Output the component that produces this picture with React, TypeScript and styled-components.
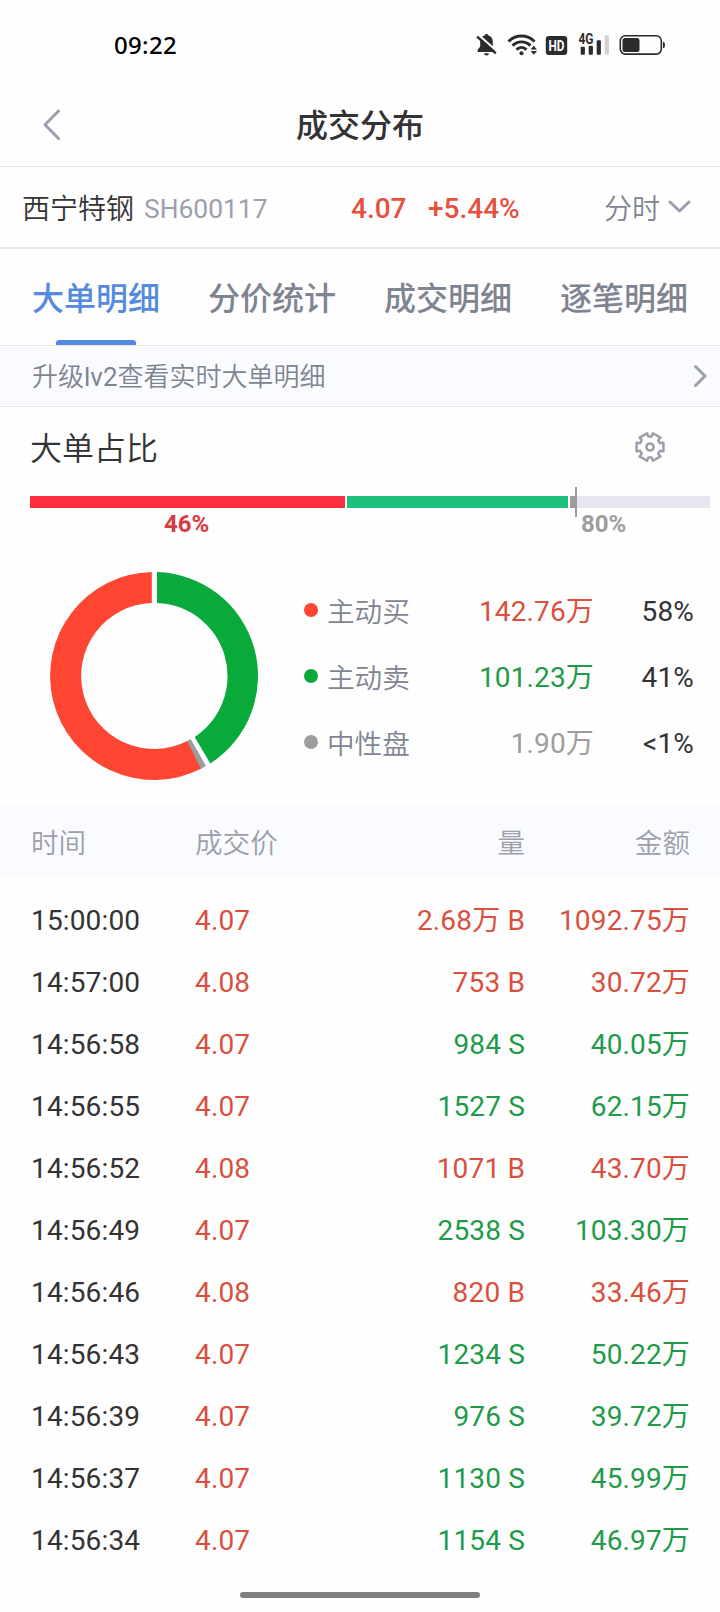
import React from "react";
import styled, { createGlobalStyle } from "styled-components";

const color = {
  ink: "#333333",
  slate: "#7f8491",
  mute: "#9c9fab",
  line: "#e5e6ea",
  panel: "#fafbff",
  blue: "#548ae0",
  up: "#d9503f",
  down: "#219a4a",
  gray: "#9d9d9d",
};

const GlobalStyle = createGlobalStyle`
  *, *::before, *::after { box-sizing: border-box; }
  body {
    margin: 0;
    background: #fefefe;
    color: ${color.ink};
    font-family: Roboto, "Noto Sans CJK SC", sans-serif;
    font-size: 28px;
  }
`;

const Screen = styled.main`
  display: flex;
  flex-direction: column;
  width: 720px;
  height: 1612px;
  overflow: hidden;
  background: #fefefe;
`;

const StatusBar = styled.div`
  display: flex;
  align-items: center;
  justify-content: space-between;
  height: 90px;
  padding: 0 54px 0 114px;
`;

const Clock = styled.span`
  font: 500 24px/30px "Noto Sans", sans-serif;
  letter-spacing: 0.3px;
  color: #000;
`;

const StatusIcons = styled.svg`
  display: block;
  width: 190px;
  height: 26px;
`;

const NavBar = styled.header`
  display: grid;
  grid-template-columns: 60px 1fr 60px;
  align-items: center;
  height: 77px;
  padding: 0 24px 8px;
  border-bottom: 1px solid ${color.line};
`;

const BackButton = styled.button`
  display: flex;
  align-items: center;
  padding: 1px 0 0 18px;
  border: 0;
  background: none;
`;

const Title = styled.h1`
  margin: 0;
  padding-top: 4px;
  font-size: 32px;
  line-height: 40px;
  font-weight: 500;
  text-align: center;
`;

const StockRow = styled.section`
  display: flex;
  align-items: center;
  height: 82px;
  padding: 4px 29px 0 22px;
  border-bottom: 2px solid ${color.line};
  line-height: 40px;
`;

const StockName = styled.span`
  width: 122px;
  padding-top: 1px;
  font-weight: 350;
`;

const StockCode = styled.span`
  width: 207px;
  padding-bottom: 1px;
  font-size: 26.4px;
  color: ${color.mute};
`;

const Quote = styled.span<{ $width: number }>`
  width: ${(p) => p.$width}px;
  font-weight: 500;
  color: #e5503f;
`;

const PeriodPicker = styled.button`
  display: flex;
  align-items: center;
  gap: 8px;
  margin-left: auto;
  padding: 1px 0 0;
  border: 0;
  background: none;
  font: inherit;
  font-weight: 350;
  color: ${color.slate};

  svg { margin-top: -5px; }
`;

const Tabs = styled.nav`
  display: grid;
  grid-template-columns: repeat(4, 176px);
  justify-content: center;
  height: 97px;
  border-bottom: 1px solid ${color.line};
`;

const Tab = styled.button<{ $active?: boolean }>`
  display: flex;
  flex-direction: column;
  align-items: center;
  justify-content: space-between;
  padding: 30px 0 0;
  border: 0;
  background: none;
  font: 500 32px/40px Roboto, "Noto Sans CJK SC", sans-serif;
  color: ${(p) => (p.$active ? color.blue : color.slate)};

  &::after {
    content: "";
    width: 80px;
    height: 5px;
    border-radius: 3px 3px 0 0;
    background: ${(p) => (p.$active ? color.blue : "transparent")};
  }
`;

const Notice = styled.section`
  display: flex;
  align-items: center;
  justify-content: space-between;
  height: 61px;
  padding: 0 12px 0 32px;
  border-bottom: 1px solid ${color.line};
  background: ${color.panel};
  font-size: 26px;
  line-height: 36px;
  font-weight: 350;
  color: ${color.slate};
`;

const NoticeText = styled.span`
  padding-top: 2px;
`;

const Level = styled.span`
  font-weight: 400;
`;

const RatioHeader = styled.div`
  display: flex;
  align-items: center;
  justify-content: space-between;
  height: 80px;
  padding: 0 54px 1px 30px;
`;

const RatioTitle = styled.h2`
  margin: 0;
  padding-top: 4px;
  font-size: 32px;
  line-height: 40px;
  font-weight: 350;
`;

const RatioBar = styled.div`
  display: flex;
  align-items: center;
  gap: 2px;
  height: 30px;
  padding: 0 10px 0 30px;
`;

const Segment = styled.div<{ $width: number; $fill: string }>`
  width: ${(p) => p.$width}px;
  height: 12px;
  background: ${(p) => p.$fill};
`;

const Marker = styled.div`
  width: 2px;
  height: 30px;
  margin-left: -2px;
  background: ${color.gray};
`;

const Rest = styled.div`
  flex: 1;
  height: 12px;
  margin-left: -2px;
  background: #e5e6f0;
`;

const RatioLabels = styled.div`
  display: flex;
  height: 35px;
  padding-left: 164px;
  margin-top: -7px;
  font-size: 24px;
  line-height: 28px;
  font-weight: 700;
`;

const RatioLabel = styled.span<{ $width: number; $color: string }>`
  width: ${(p) => p.$width}px;
  color: ${(p) => p.$color};
`;

const Distribution = styled.section`
  display: flex;
  height: 261px;
  padding-left: 50px;
`;

const Donut = styled.svg`
  width: 208px;
  height: 208px;
  margin-top: 27px;
`;

const Legend = styled.ul`
  display: flex;
  flex-direction: column;
  margin: 32px 0 0 46px;
  padding: 0;
  list-style: none;
`;

const LegendRow = styled.li`
  display: grid;
  grid-template-columns: 23px 120px 147px 100px;
  align-items: center;
  height: 66px;
  line-height: 40px;
`;

const Dot = styled.span<{ $fill: string }>`
  width: 14px;
  height: 14px;
  border-radius: 50%;
  background: ${(p) => p.$fill};
`;

const LegendName = styled.span`
  padding-top: 5px;
  font-size: 27.6px;
  font-weight: 350;
  color: ${color.slate};
`;

const LegendValue = styled.span<{ $color?: string }>`
  padding-top: 4px;
  letter-spacing: 0.15px;
  text-align: right;
  color: ${(p) => p.$color ?? color.ink};
`;

const TableRow = styled.div`
  display: grid;
  grid-template-columns: 164px 139px 191px 165px;
  align-items: center;
  height: 62px;
  padding: 2px 30px 0 31px;
  line-height: 40px;
  letter-spacing: 0.15px;
`;

const TableHead = styled(TableRow)`
  height: 70px;
  padding-top: 5px;
  background: ${color.panel};
  font-size: 27.6px;
  font-weight: 350;
  letter-spacing: 0;
  color: ${color.mute};
`;

const TableBody = styled.div`
  display: flex;
  flex-direction: column;
  padding-top: 13px;
`;

const Cell = styled.span<{ $end?: boolean; $color?: string }>`
  text-align: ${(p) => (p.$end ? "right" : "left")};
  color: ${(p) => p.$color ?? "inherit"};
  white-space: nowrap;
`;

const HomeIndicator = styled.div`
  flex: none;
  width: 240px;
  height: 6px;
  margin: 21px auto 0;
  border-radius: 3px;
  background: #808080;
`;

const tabs = ["大单明细", "分价统计", "成交明细", "逐笔明细"];

const legend = [
  { name: "主动买", value: "142.76万", share: "58%", fill: "#fe4633", text: color.up },
  { name: "主动卖", value: "101.23万", share: "41%", fill: "#09a93b", text: color.down },
  { name: "中性盘", value: "1.90万", share: "<1%", fill: color.gray, text: color.gray },
];

type Side = "B" | "S";
const trades: [string, string, string, Side, string][] = [
  ["15:00:00", "4.07", "2.68万", "B", "1092.75万"],
  ["14:57:00", "4.08", "753", "B", "30.72万"],
  ["14:56:58", "4.07", "984", "S", "40.05万"],
  ["14:56:55", "4.07", "1527", "S", "62.15万"],
  ["14:56:52", "4.08", "1071", "B", "43.70万"],
  ["14:56:49", "4.07", "2538", "S", "103.30万"],
  ["14:56:46", "4.08", "820", "B", "33.46万"],
  ["14:56:43", "4.07", "1234", "S", "50.22万"],
  ["14:56:39", "4.07", "976", "S", "39.72万"],
  ["14:56:37", "4.07", "1130", "S", "45.99万"],
  ["14:56:34", "4.07", "1154", "S", "46.97万"],
];

function StatusGlyphs() {
  return (
    <StatusIcons viewBox="0.5 -0.3 190 26" fill="#2b2b2b">
      {/* muted bell */}
      <path d="M11 1.600c.9 0 1.700.6 1.900 1.500 2.800.8 4.400 3 4.400 6v5.200l2.500 3.100v2.200H2.200v-2.200l2.500-3.100V9.100c0-3 1.600-5.200 4.400-6 .2-.9 1-1.500 1.900-1.500zM8.600 20.900h4.800a2.400 2.400 0 0 1-4.800 0z" />
      <path d="M2.500 2.200 22 19.400" stroke="#fefefe" strokeWidth="2.200" />
      <path d="M1.600 4.300 20.300 21" stroke="#2b2b2b" strokeWidth="2.400" />
      {/* wifi */}
      <g fill="none" stroke="#2b2b2b" strokeWidth="2.900">
        <path d="M33 9.200c7.300-7.300 18.700-7.300 26 0" />
        <path d="M37 13.300c5.100-5 12.900-5 18 0" />
        <path d="M41 17.300c2.900-2.900 7.100-2.900 10 0" />
      </g>
      <circle cx="46" cy="21" r="2" />
      <path d="m58.300 13.400 3.200 3.800h-6.400zm0 9 3.200-3.800h-6.400z" />
      {/* HD badge */}
      <rect x="70.300" y="3.800" width="21.400" height="18.800" rx="3" />
      <text x="81" y="18.400" textAnchor="middle" textLength="16" lengthAdjust="spacingAndGlyphs" fontFamily="Roboto" fontSize="14.500" fontWeight="700" fill="#fff">HD</text>
      {/* signal */}
      <text x="103" y="11.600" textLength="15" lengthAdjust="spacingAndGlyphs" fontFamily="Roboto" fontSize="14" fontWeight="700">4G</text>
      <rect x="105.200" y="14.500" width="4.200" height="8" rx="1" />
      <rect x="113.200" y="13.500" width="4.200" height="9" rx="1" />
      <rect x="121.200" y="8" width="4.200" height="14.500" rx="1" />
      <rect x="129.200" y="3" width="4.200" height="19.500" rx="1" fill="#d2d2d2" />
      {/* battery */}
      <rect x="144.800" y="3.500" width="41" height="18.300" rx="5" fill="none" stroke="#2b2b2b" strokeWidth="1.600" />
      <rect x="147" y="5.700" width="17" height="14" rx="2.500" />
      <path d="M187.500 9.500c1.300 0 1.900 1 1.900 3.200s-.6 3.200-1.900 3.200z" />
    </StatusIcons>
  );
}

type ChevronProps = { points: string; width: number; height: number; stroke?: string };
function Chevron({ points, width, height, stroke = color.mute }: ChevronProps) {
  return (
    <svg width={width} height={height} viewBox={`0 0 ${width} ${height}`}>
      <polyline points={points} fill="none" stroke={stroke} strokeWidth="3" strokeLinecap="round" strokeLinejoin="round" />
    </svg>
  );
}

function gearPoints() {
  const out: string[] = [];
  for (let tooth = 0; tooth < 6; tooth++) {
    for (const [offset, radius] of [[-21, 10.6], [-18, 14.1], [18, 14.1], [21, 10.6]]) {
      const a = ((tooth * 60 + offset) * Math.PI) / 180;
      out.push(`${(radius * Math.cos(a)).toFixed(2)},${(radius * Math.sin(a)).toFixed(2)}`);
    }
  }
  return out.join(" ");
}

function Gear() {
  return (
    <svg width="32" height="32" viewBox="-16 -16 32 32" fill="none" stroke={color.mute} strokeWidth="2.500" strokeLinejoin="round">
      <polygon points={gearPoints()} />
      <circle r="3.600" />
    </svg>
  );
}

export default function App() {
  return (
    <>
      <GlobalStyle />
      <Screen>
        <StatusBar>
          <Clock>09:22</Clock>
          <StatusGlyphs />
        </StatusBar>
        <NavBar>
          <BackButton aria-label="返回">
            <Chevron width={19} height={32} points="16.500,2 3,15.800 16.500,29.500" />
          </BackButton>
          <Title>成交分布</Title>
        </NavBar>
        <StockRow>
          <StockName>西宁特钢</StockName>
          <StockCode>SH600117</StockCode>
          <Quote $width={77}>4.07</Quote>
          <Quote $width={100}>+5.44%</Quote>
          <PeriodPicker>
            分时
            <Chevron width={23} height={14} points="2,2 11.500,11 21,2" />
          </PeriodPicker>
        </StockRow>
        <Tabs>
          {tabs.map((name, i) => (
            <Tab key={name} $active={i === 0}>{name}</Tab>
          ))}
        </Tabs>
        <Notice>
          <NoticeText>升级<Level>lv2</Level>查看实时大单明细</NoticeText>
          <Chevron width={15} height={24} points="2.500,2.500 12,12 2.500,21.500" />
        </Notice>
        <RatioHeader>
          <RatioTitle>大单占比</RatioTitle>
          <Gear />
        </RatioHeader>
        <RatioBar>
          <Segment $width={315} $fill="#fc2d3c" />
          <Segment $width={221} $fill="#1dbf7c" />
          <Segment $width={5} $fill={color.gray} />
          <Marker />
          <Rest />
        </RatioBar>
        <RatioLabels>
          <RatioLabel $width={417} $color="#d93a43">46%</RatioLabel>
          <RatioLabel $width={60} $color={color.gray}>80%</RatioLabel>
        </RatioLabels>
        <Distribution>
          <Donut viewBox="-104 -104 208 208">
            <path fill="#09a93b" d="M3-104A104 104 0 0 1 56.300 87.400L40.700 60.900A73 73 0 0 0 3-73Z" />
            <path fill={color.gray} d="M52 90A104 104 0 0 1 46.500 93L33 65A73 73 0 0 0 36.700 63Z" />
            <path fill="#fe4633" d="M47 92.800A104 104 0 1 1-2.200-104V-73A73 73 0 1 0 33.300 65Z" />
          </Donut>
          <Legend>
            {legend.map((item) => (
              <LegendRow key={item.name}>
                <Dot $fill={item.fill} />
                <LegendName>{item.name}</LegendName>
                <LegendValue $color={item.text}>{item.value}</LegendValue>
                <LegendValue>{item.share}</LegendValue>
              </LegendRow>
            ))}
          </Legend>
        </Distribution>
        <TableHead>
          <Cell>时间</Cell>
          <Cell>成交价</Cell>
          <Cell $end>量</Cell>
          <Cell $end>金额</Cell>
        </TableHead>
        <TableBody>
          {trades.map(([time, price, volume, side, amount]) => {
            const tone = side === "B" ? color.up : color.down;
            return (
              <TableRow key={time}>
                <Cell>{time}</Cell>
                <Cell $color={color.up}>{price}</Cell>
                <Cell $end $color={tone}>{volume} {side}</Cell>
                <Cell $end $color={tone}>{amount}</Cell>
              </TableRow>
            );
          })}
        </TableBody>
        <HomeIndicator />
      </Screen>
    </>
  );
}
